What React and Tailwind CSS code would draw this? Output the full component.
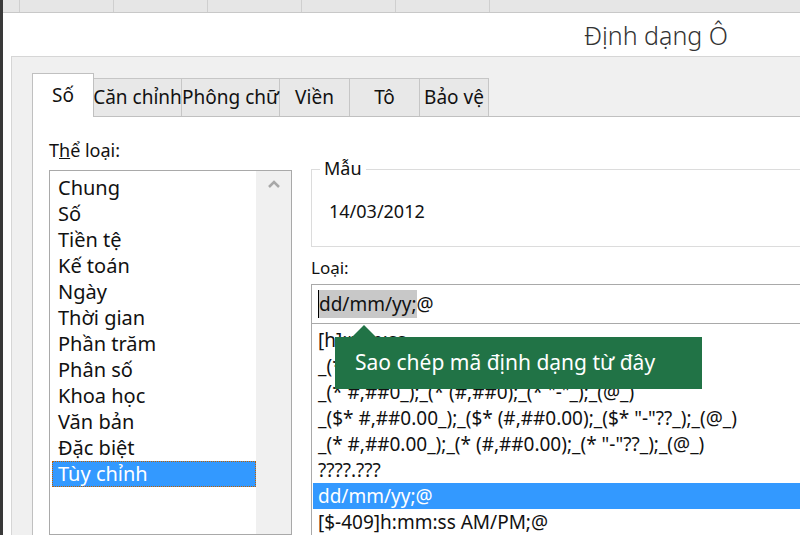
import React from "react";

const categories = ["Chung", "Số", "Tiền tệ", "Kế toán", "Ngày", "Thời gian", "Phần trăm", "Phân số", "Khoa học", "Văn bản", "Đặc biệt", "Tùy chỉnh"];
const tabs = [
  { label: "Căn chỉnh", w: "w-[88px]" },
  { label: "Phông chữ", w: "w-[98px]" },
  { label: "Viền", w: "w-[70px]" },
  { label: "Tô", w: "w-[70px]" },
  { label: "Bảo vệ", w: "w-[69px]" },
];
const codes = [
  "[h]:mm:ss",
  "_(* #,##0_);_(* (#,##0);_(* \"-\"_);_(@_)",
  "_(* #,##0_);_(* (#,##0);_(* \"-\"_);_(@_)",
  "_($* #,##0.00_);_($* (#,##0.00);_($* \"-\"??_);_(@_)",
  "_(* #,##0.00_);_(* (#,##0.00);_(* \"-\"??_);_(@_)",
  "????.???",
];

export default function App() {
  return (
    <div className="w-[800px] h-[535px] overflow-hidden bg-[#3a3a3a] pl-[3px] font-['Noto_Sans',sans-serif] text-[#111]">
      <div className="h-[13px] flex bg-[#e6e6e6] border-b border-[#c8c8c8]">
        {[0, 1, 2, 3, 4, 5].map((i) => (
          <div key={i} className="w-[94px] border-r border-[#cfcfcf] first:w-[17px]" />
        ))}
      </div>
      <div className="h-[522px] bg-white flex flex-col">
        <div className="h-[59px] flex justify-end items-center pr-[72px] pt-[2px]">
          <span className="text-[25px] text-[#333] font-light">Định dạng Ô</span>
        </div>
        <div className="flex-1 ml-[8px] bg-[#f0f0f0] border-t border-l border-[#d6d6d6] pl-[20px] pt-[16px] flex flex-col">
          <div className="flex items-end h-[44px] font-['Lato',sans-serif] whitespace-nowrap">
            <div className="w-[62px] h-[44px] bg-white border border-b-0 border-[#c0c0c0] flex items-center justify-center text-[19px] relative z-10">Số</div>
            {tabs.map((t) => (
              <div key={t.label} className={`${t.w} h-[39px] bg-[#e8e8e8] border border-l-0 border-[#c6c6c6] flex items-center justify-center text-[19px]`}>{t.label}</div>
            ))}
          </div>
          <div className="flex-1 bg-white border-l border-t border-[#c0c0c0] -mt-px flex pl-[16px]">
            <div className="w-[243px] flex flex-col pt-[22px]">
              <div className="text-[18px] leading-[22px] mb-[9px]">T<span className="underline">h</span>ể loại:</div>
              <div className="flex-1 border border-[#a9a9a9] flex">
                <div className="flex-1 pt-[4px] pl-[2px]">
                  {categories.map((c) => (
                    <div key={c} className={`h-[26px] leading-[26px] text-[20px] pl-[6px] ${c === "Tùy chỉnh" ? "bg-[#3399ff] text-white outline-1 outline-dotted outline-[#c06000] -outline-offset-1" : ""}`}>{c}</div>
                  ))}
                </div>
                <div className="w-[35px] bg-[#f0f0f0] flex justify-center pt-[8px]">
                  <svg width="14" height="10" viewBox="0 0 14 10"><path d="M2 8 L7 3 L12 8" fill="none" stroke="#a8a8a8" strokeWidth="2.5" /></svg>
                </div>
              </div>
            </div>
            <div className="flex-1 ml-[19px] flex flex-col pt-[52px]">
              <div className="h-[78px] border border-[#dcdcdc] border-r-0 relative">
                <span className="absolute -top-[15px] left-[8px] bg-white px-[4px] text-[18px]">Mẫu</span>
                <div className="pt-[28px] pl-[17px] text-[18px]">14/03/2012</div>
              </div>
              <div className="text-[17px] mt-[8px] leading-[26px]">Loại:</div>
              <div className="h-[40px] mt-[3px] border border-[#a9a9a9] border-r-0 flex items-center pl-[6px] text-[19px] font-['Liberation_Sans',sans-serif]">
                <span className="bg-[#c8c8c8] border-l border-black">dd/mm/yy;</span><span>@</span>
              </div>
              <div className="flex-1 border-l border-[#a9a9a9] pl-[6px] pt-[3px] text-[19px] font-['Liberation_Sans',sans-serif] relative">
                {codes.map((c, i) => (
                  <div key={i} className="h-[26px] leading-[26px] whitespace-nowrap">{c}</div>
                ))}
                <div className="h-[26px] leading-[26px] -ml-[5px] pl-[5px] bg-[#3399ff] text-white">dd/mm/yy;@</div>
                <div className="h-[26px] leading-[26px]">[$-409]h:mm:ss AM/PM;@</div>
                <div className="absolute left-[23px] top-[13px] w-[367px] h-[52px] bg-[#217346] text-white text-[21px] flex items-center pl-[20px] font-['Noto_Sans',sans-serif]">
                  Sao chép mã định dạng từ đây
                  <div className="absolute -top-[12px] left-[17px] w-0 h-0 border-l-[12px] border-r-[12px] border-b-[12px] border-l-transparent border-r-transparent border-b-[#217346]" />
                </div>
              </div>
            </div>
          </div>
        </div>
      </div>
    </div>
  );
}
